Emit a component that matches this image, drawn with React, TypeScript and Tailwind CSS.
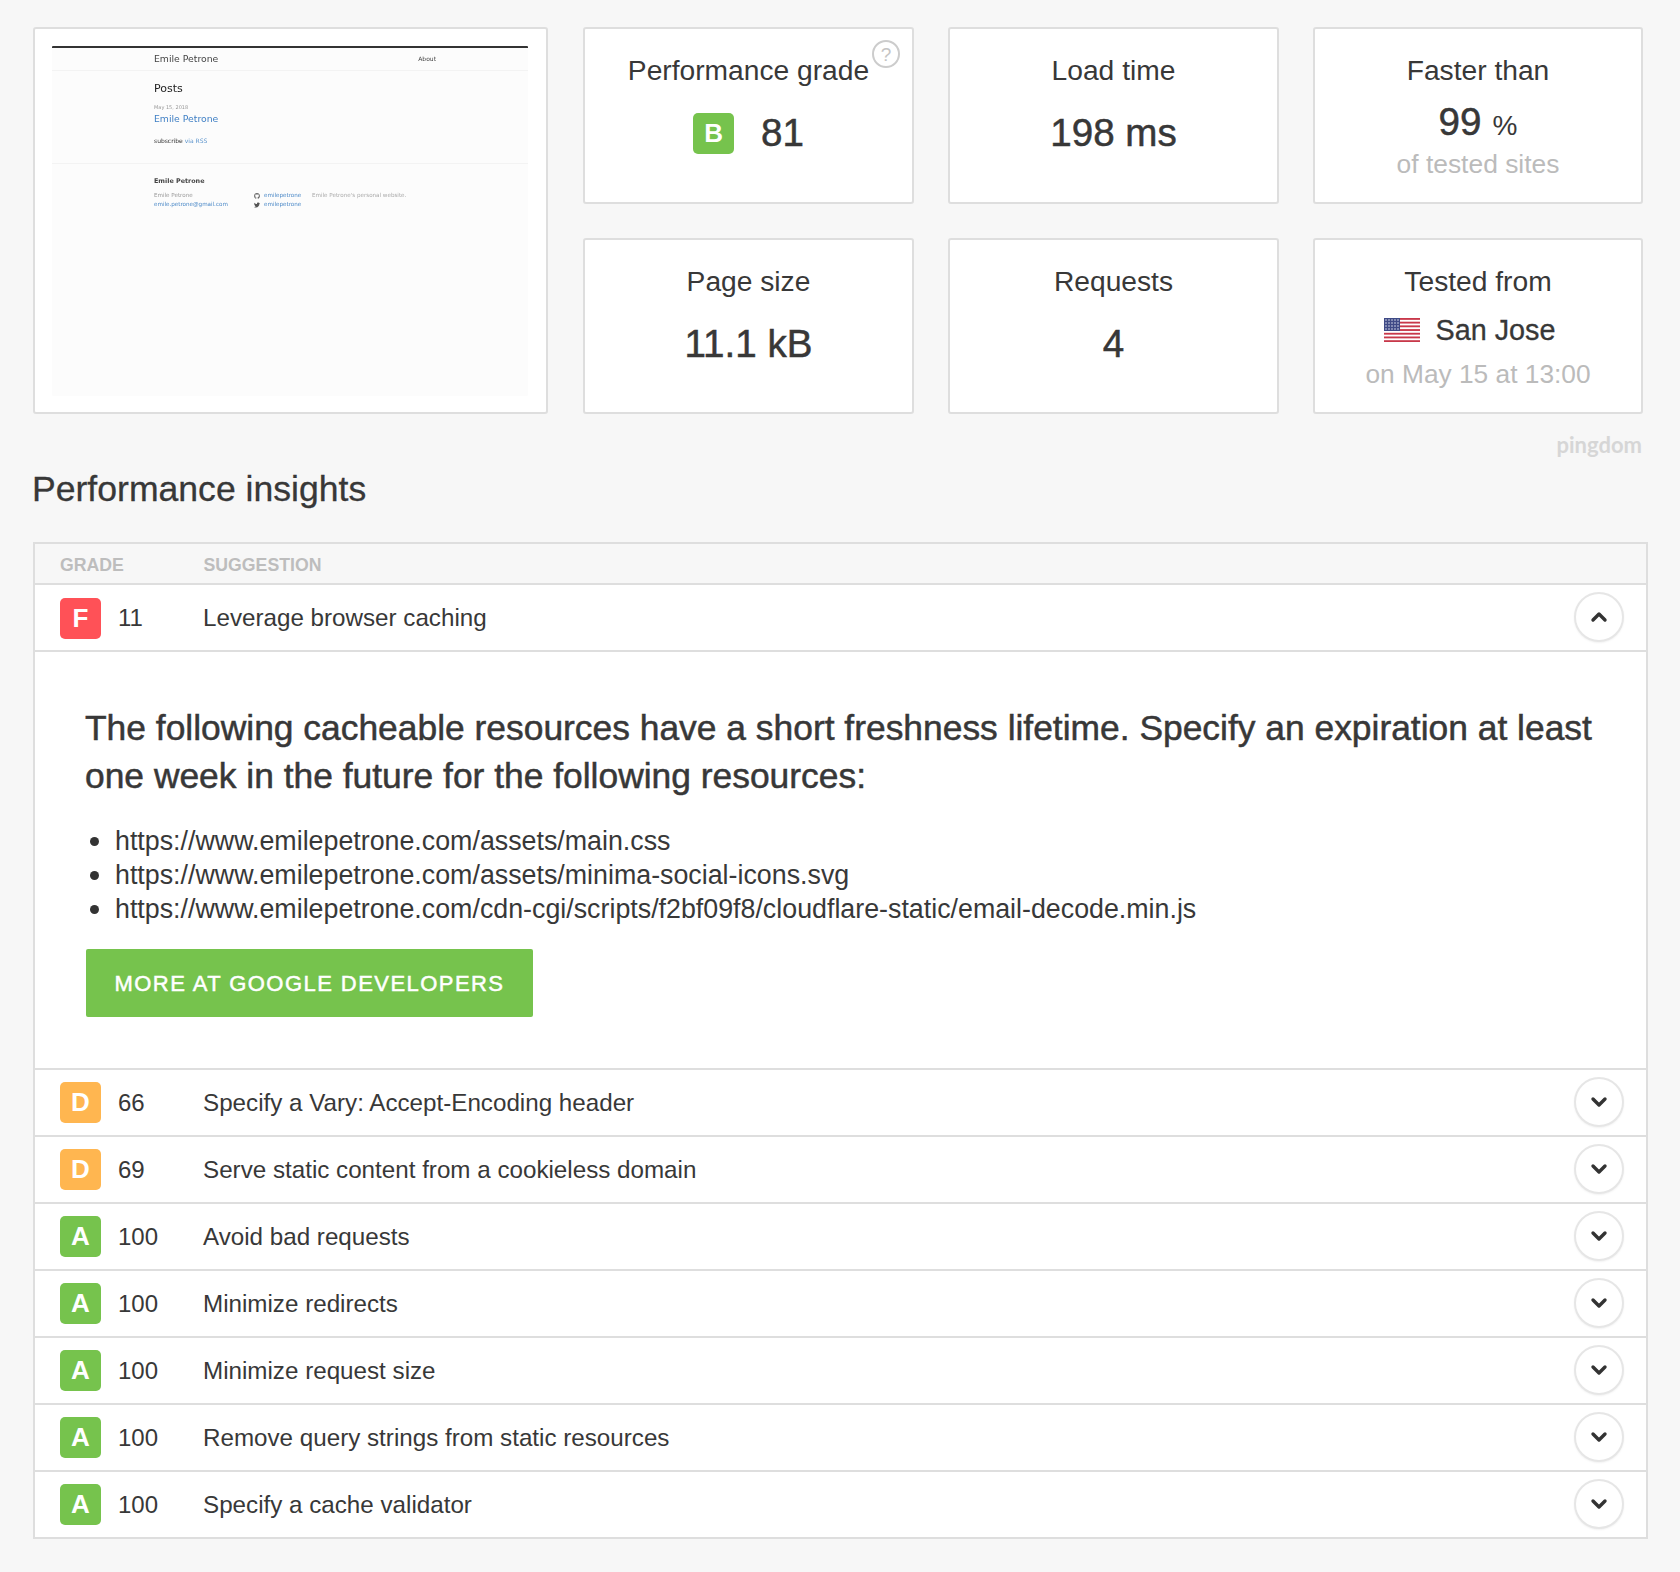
import { ChevronDown, ChevronUp } from 'lucide-react'
import { FaGithub, FaTwitter } from 'react-icons/fa'

const gradeColors: Record<string, string> = {
  A: 'bg-[#76c34d]',
  B: 'bg-[#76c34d]',
  D: 'bg-[#ffb650]',
  F: 'bg-[#ff5157]',
}

const rows = [
  { grade: 'D', score: 66, text: 'Specify a Vary: Accept-Encoding header' },
  { grade: 'D', score: 69, text: 'Serve static content from a cookieless domain' },
  { grade: 'A', score: 100, text: 'Avoid bad requests' },
  { grade: 'A', score: 100, text: 'Minimize redirects' },
  { grade: 'A', score: 100, text: 'Minimize request size' },
  { grade: 'A', score: 100, text: 'Remove query strings from static resources' },
  { grade: 'A', score: 100, text: 'Specify a cache validator' },
]

function Badge({ grade }: { grade: string }) {
  return (
    <span className={`flex h-[41px] w-[41px] shrink-0 items-center justify-center rounded-[5px] text-[26px] font-bold text-white ${gradeColors[grade]}`}>
      {grade}
    </span>
  )
}

function Card({ title, children }: { title: string; children: React.ReactNode }) {
  return (
    <div className="relative flex h-full flex-col items-center rounded-[3px] border-2 border-[#dedede] bg-white pt-[24px]">
      <div className="text-[28.2px] leading-[34px]">{title}</div>
      {children}
    </div>
  )
}

function Value({ children }: { children: React.ReactNode }) {
  return <div className="mt-[23px] text-[38.6px] leading-[46px] [-webkit-text-stroke:0.5px_#363636]">{children}</div>
}

function Flag() {
  return (
    <svg width="36" height="24" viewBox="0 0 36 24">
      <rect width="36" height="24" fill="#fff" />
      {[0, 2, 4, 6, 8, 10, 12].map((i) => (
        <rect key={i} y={i * 1.85} width="36" height="1.85" fill="#c8384a" />
      ))}
      <rect width="16" height="13" fill="#3f4a86" />
      {[2, 5, 8, 11].map((y) =>
        [2, 5, 8, 11, 14].map((x) => <circle key={`${x}-${y}`} cx={x} cy={y} r="0.8" fill="#d9dcec" />),
      )}
    </svg>
  )
}

function Thumbnail() {
  return (
    <div className="h-[350px] w-[476px] overflow-hidden rounded-[1px] border-t-2 border-[#333] bg-[#fcfcfc] font-['DejaVu_Sans',sans-serif] blur-[0.3px]">
      <div className="flex h-[23px] items-center border-b border-[#f3f3f3] pl-[102px] pr-[92px] text-[9.3px] text-[#444]">
        <span>Emile Petrone</span>
        <span className="-mt-[2px] ml-auto text-[6px]">About</span>
      </div>
      <div className="h-[93px] border-b border-[#f3f3f3] pl-[102px] pt-[11px]">
        <div className="text-[11px] leading-[14px] text-[#222]">Posts</div>
        <div className="mt-[8px] text-[5px] leading-[7px] text-[#999]">May 15, 2018</div>
        <div className="mt-[1px] text-[9.3px] leading-[14px] text-[#3f7fc4]">Emile Petrone</div>
        <div className="mt-[11px] text-[6px] leading-[8px] text-[#333]">
          subscribe <span className="text-[#5a93cc]">via RSS</span>
        </div>
      </div>
      <div className="pl-[102px] pt-[12px]">
        <div className="text-[6.4px] leading-[10px] font-bold text-[#444]">Emile Petrone</div>
        <div className="mt-[5px] flex text-[5.6px] leading-[9px]">
          <div className="w-[100px]">
            <div className="text-[#999]">Emile Petrone</div>
            <div className="text-[#4a88c7]">emile.petrone@gmail.com</div>
          </div>
          <div className="w-[58px] text-[#4a88c7]">
            <div className="flex items-center gap-[4px]">
              <FaGithub size={6} color="#666" />
              emilepetrone
            </div>
            <div className="flex items-center gap-[4px]">
              <FaTwitter size={6} color="#555" />
              emilepetrone
            </div>
          </div>
          <div className="text-[#aaa]">Emile Petrone's personal website.</div>
        </div>
      </div>
    </div>
  )
}

function Row({
  grade,
  score,
  text,
  open,
  last,
}: {
  grade: string
  score: number
  text: string
  open?: boolean
  last?: boolean
}) {
  return (
    <div className={`flex items-center bg-white pl-[25px] pr-[22px] text-[24px] ${last ? 'h-[65px]' : 'h-[67px] border-b-2 border-[#dedede]'}`}>
      <span className={open ? 'mt-[2px]' : ''}>
        <Badge grade={grade} />
      </span>
      <span className="ml-[17px] mt-[1px] w-[85px]">{score}</span>
      <span className="mt-[1px] text-[24.2px]">{text}</span>
      <span className="-mt-[1px] ml-auto flex h-[50px] w-[50px] items-center justify-center rounded-full border-2 border-[#e6e6e6] bg-white shadow-[0_1px_2px_rgba(0,0,0,0.06)]">
        {open ? <ChevronUp size={24} strokeWidth={3.4} color="#333" /> : <ChevronDown size={24} strokeWidth={3.4} color="#333" />}
      </span>
    </div>
  )
}

export default function App() {
  return (
    <div className="h-[1572px] bg-[#f7f7f7] pl-[33px] pt-[27px] font-['Liberation_Sans',Arial,sans-serif] text-[#383838]">
      <div className="flex w-[1610px] gap-[35px]">
        <div className="h-[387px] w-[515px] shrink-0 rounded-[3px] border-2 border-[#dedede] bg-white pl-[17px] pt-[17px]">
          <Thumbnail />
        </div>
        <div className="grid grid-cols-[331px_331px_330px] grid-rows-[177px_176px] gap-x-[34px] gap-y-[34px]">
          <Card title="Performance grade">
            <span className="absolute right-[12px] top-[11px] flex h-[28px] w-[28px] items-center justify-center rounded-full border-2 border-[#cccccc] text-[19px] leading-none text-[#c4c4c4]">
              ?
            </span>
            <div className="mt-[23px] flex items-center gap-[27px]">
              <Badge grade="B" />
              <span className="text-[38.6px] leading-[46px] [-webkit-text-stroke:0.5px_#363636]">81</span>
            </div>
          </Card>
          <Card title="Load time">
            <Value>198 ms</Value>
          </Card>
          <Card title="Faster than">
            <div className="mt-[12px] flex items-baseline gap-[11px] text-[38.6px] leading-[46px] [-webkit-text-stroke:0.5px_#363636]">
              99 <span className="text-[28px] [-webkit-text-stroke:0px]">%</span>
            </div>
            <div className="text-[26.4px] leading-[30px] text-[#bbbbbb]">of tested sites</div>
          </Card>
          <Card title="Page size">
            <Value>11.1 kB</Value>
          </Card>
          <Card title="Requests">
            <Value>4</Value>
          </Card>
          <Card title="Tested from">
            <div className="mr-[16px] mt-[14px] flex items-center gap-[15px] text-[28.8px] leading-[36px] [-webkit-text-stroke:0.3px_#363636]">
              <Flag />
              San Jose
            </div>
            <div className="mt-[9px] text-[26.3px] leading-[34px] text-[#bbbbbb]">on May 15 at 13:00</div>
          </Card>
        </div>
      </div>

      <div className="flex w-[1609px] justify-end pt-[18px] font-['Lato',sans-serif] text-[22px] leading-[26px] font-bold text-[#d6d6d6]">
        pingdom
      </div>

      <h2 className="-ml-[1px] mt-[1px] text-[35.6px] leading-[60px] [-webkit-text-stroke:0.3px_#363636]">Performance insights</h2>

      <div className="mt-[23px] w-[1615px] border-2 border-[#dedede]">
        <div className="flex h-[41px] items-center border-b-2 border-[#dedede] pl-[25px] pt-[3px] text-[17.7px] font-bold text-[#bdbdbd]">
          <span className="w-[143.5px]">GRADE</span>
          <span>SUGGESTION</span>
        </div>
        <Row grade="F" score={11} text="Leverage browser caching" open />
        <div className="h-[418px] border-b-2 border-[#dedede] bg-white pl-[50px] pr-[40px] pt-[52px]">
          <div className="text-[35.4px] leading-[48px] [-webkit-text-stroke:0.5px_#363636]">
            The following cacheable resources have a short freshness lifetime. Specify an expiration at least one week in the future for the following resources:
          </div>
          <ul className="mt-[24px] list-none text-[26.8px] leading-[34px]">
            {[
              'https://www.emilepetrone.com/assets/main.css',
              'https://www.emilepetrone.com/assets/minima-social-icons.svg',
              'https://www.emilepetrone.com/cdn-cgi/scripts/f2bf09f8/cloudflare-static/email-decode.min.js',
            ].map((url) => (
              <li key={url} className="flex items-center">
                <span className="ml-[5px] mr-[16px] h-[9px] w-[9px] rounded-full bg-[#333]" />
                {url}
              </li>
            ))}
          </ul>
          <button className="ml-[1px] mt-[23px] flex h-[68px] w-[447px] items-center justify-center rounded-[2px] bg-[#76c34d] text-[22px] tracking-[1.45px] text-white [-webkit-text-stroke:0.5px_#ffffff]">
            MORE AT GOOGLE DEVELOPERS
          </button>
        </div>
        {rows.map((r, i) => (
          <Row key={r.text} {...r} last={i === rows.length - 1} />
        ))}
      </div>
    </div>
  )
}
